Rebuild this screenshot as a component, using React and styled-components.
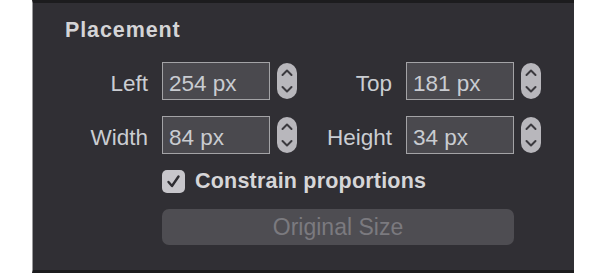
import React from "react";
import styled, { createGlobalStyle } from "styled-components";

const GlobalStyle = createGlobalStyle`
  html, body {
    margin: 0;
    padding: 0;
    background: #ffffff;
  }
  body {
    font-family: "Liberation Sans", Arial, sans-serif;
  }
`;

const Page = styled.div`
  width: 598px;
  height: 273px;
  padding-left: 32px;
  box-sizing: border-box;
`;

const Panel = styled.section`
  width: 542px;
  height: 273px;
  box-sizing: border-box;
  background: #302f34;
  border-top: 3px solid #1c1c1e;
  border-bottom: 3px solid #1c1c1e;
  border-left: 1px solid #9a9a9c;
  padding: 15px 0 0 32px;
  display: flex;
  flex-direction: column;
`;

const Title = styled.h2`
  margin: 0;
  font-size: 21.5px;
  line-height: 24px;
  font-weight: 700;
  letter-spacing: 0.9px;
  color: #d4d4d6;
`;

const Rows = styled.div`
  margin-top: 20px;
  display: flex;
  flex-direction: column;
  gap: 16px;
`;

const Row = styled.div`
  display: flex;
  align-items: center;
`;

const Field = styled.div`
  display: flex;
  align-items: center;
`;

const Label = styled.label`
  width: ${(p) => p.$width}px;
  margin-right: 14px;
  padding-top: 5px;
  text-align: right;
  font-size: 22.5px;
  color: #cacdd2;
  white-space: nowrap;
`;

const NumberInput = styled.input`
  width: 108px;
  height: 38px;
  box-sizing: border-box;
  margin: 0;
  padding: 5px 0 0 6px;
  border: 1px solid #a3a3a6;
  border-radius: 0;
  background: #4a494e;
  color: #c9ccd1;
  font-family: "Liberation Sans", Arial, sans-serif;
  font-size: 22.5px;
  outline: none;
`;

const StepperWrap = styled.div`
  width: 20px;
  height: 36px;
  margin-left: 7px;
  display: flex;
`;

const CheckRow = styled.label`
  margin-top: 16px;
  margin-left: 97px;
  height: 23px;
  display: flex;
  align-items: center;
  gap: 10px;
  font-size: 21.5px;
  font-weight: 700;
  letter-spacing: 0.2px;
  color: #d6d6d8;
`;

const CheckBox = styled.span`
  width: 23px;
  height: 23px;
  border-radius: 5px;
  background: #c7c6cb;
  display: flex;
  align-items: center;
  justify-content: center;
`;

const SizeButton = styled.button`
  margin-top: 16px;
  margin-left: 97px;
  width: 352px;
  height: 36px;
  border: none;
  border-radius: 7px;
  background: #4e4d52;
  color: #7b7a7f;
  font-family: "Liberation Sans", Arial, sans-serif;
  font-size: 23px;
  padding: 0;
  cursor: default;
`;

const Stepper = () => (
  <StepperWrap>
    <svg width="20" height="36" viewBox="0 0 20 36">
      <rect x="0" y="0" width="20" height="36" rx="10" fill="#b8b7bc" />
      <path
        d="M5.5 12 L10 7.5 L14.5 12"
        fill="none"
        stroke="#3b3a3f"
        strokeWidth="2"
        strokeLinecap="round"
        strokeLinejoin="round"
      />
      <path
        d="M5.5 24 L10 28.5 L14.5 24"
        fill="none"
        stroke="#3b3a3f"
        strokeWidth="2"
        strokeLinecap="round"
        strokeLinejoin="round"
      />
    </svg>
  </StepperWrap>
);

const NumberField = ({ label, value, labelWidth }) => (
  <Field>
    <Label $width={labelWidth}>{label}</Label>
    <NumberInput type="text" readOnly value={value} />
    <Stepper />
  </Field>
);

const App = () => {
  return (
    <Page>
      <GlobalStyle />
      <Panel>
        <Title>Placement</Title>
        <Rows>
          <Row>
            <NumberField label="Left" value="254 px" labelWidth={83} />
            <NumberField label="Top" value="181 px" labelWidth={95} />
          </Row>
          <Row>
            <NumberField label="Width" value="84 px" labelWidth={83} />
            <NumberField label="Height" value="34 px" labelWidth={95} />
          </Row>
        </Rows>
        <CheckRow>
          <CheckBox>
            <svg width="23" height="23" viewBox="0 0 23 23">
              <path
                d="M6.5 12 L10 16 L16.5 6.5"
                fill="none"
                stroke="#2e2d32"
                strokeWidth="2.4"
                strokeLinecap="round"
                strokeLinejoin="round"
              />
            </svg>
          </CheckBox>
          Constrain proportions
        </CheckRow>
        <SizeButton type="button">Original Size</SizeButton>
      </Panel>
    </Page>
  );
};

export default App;
